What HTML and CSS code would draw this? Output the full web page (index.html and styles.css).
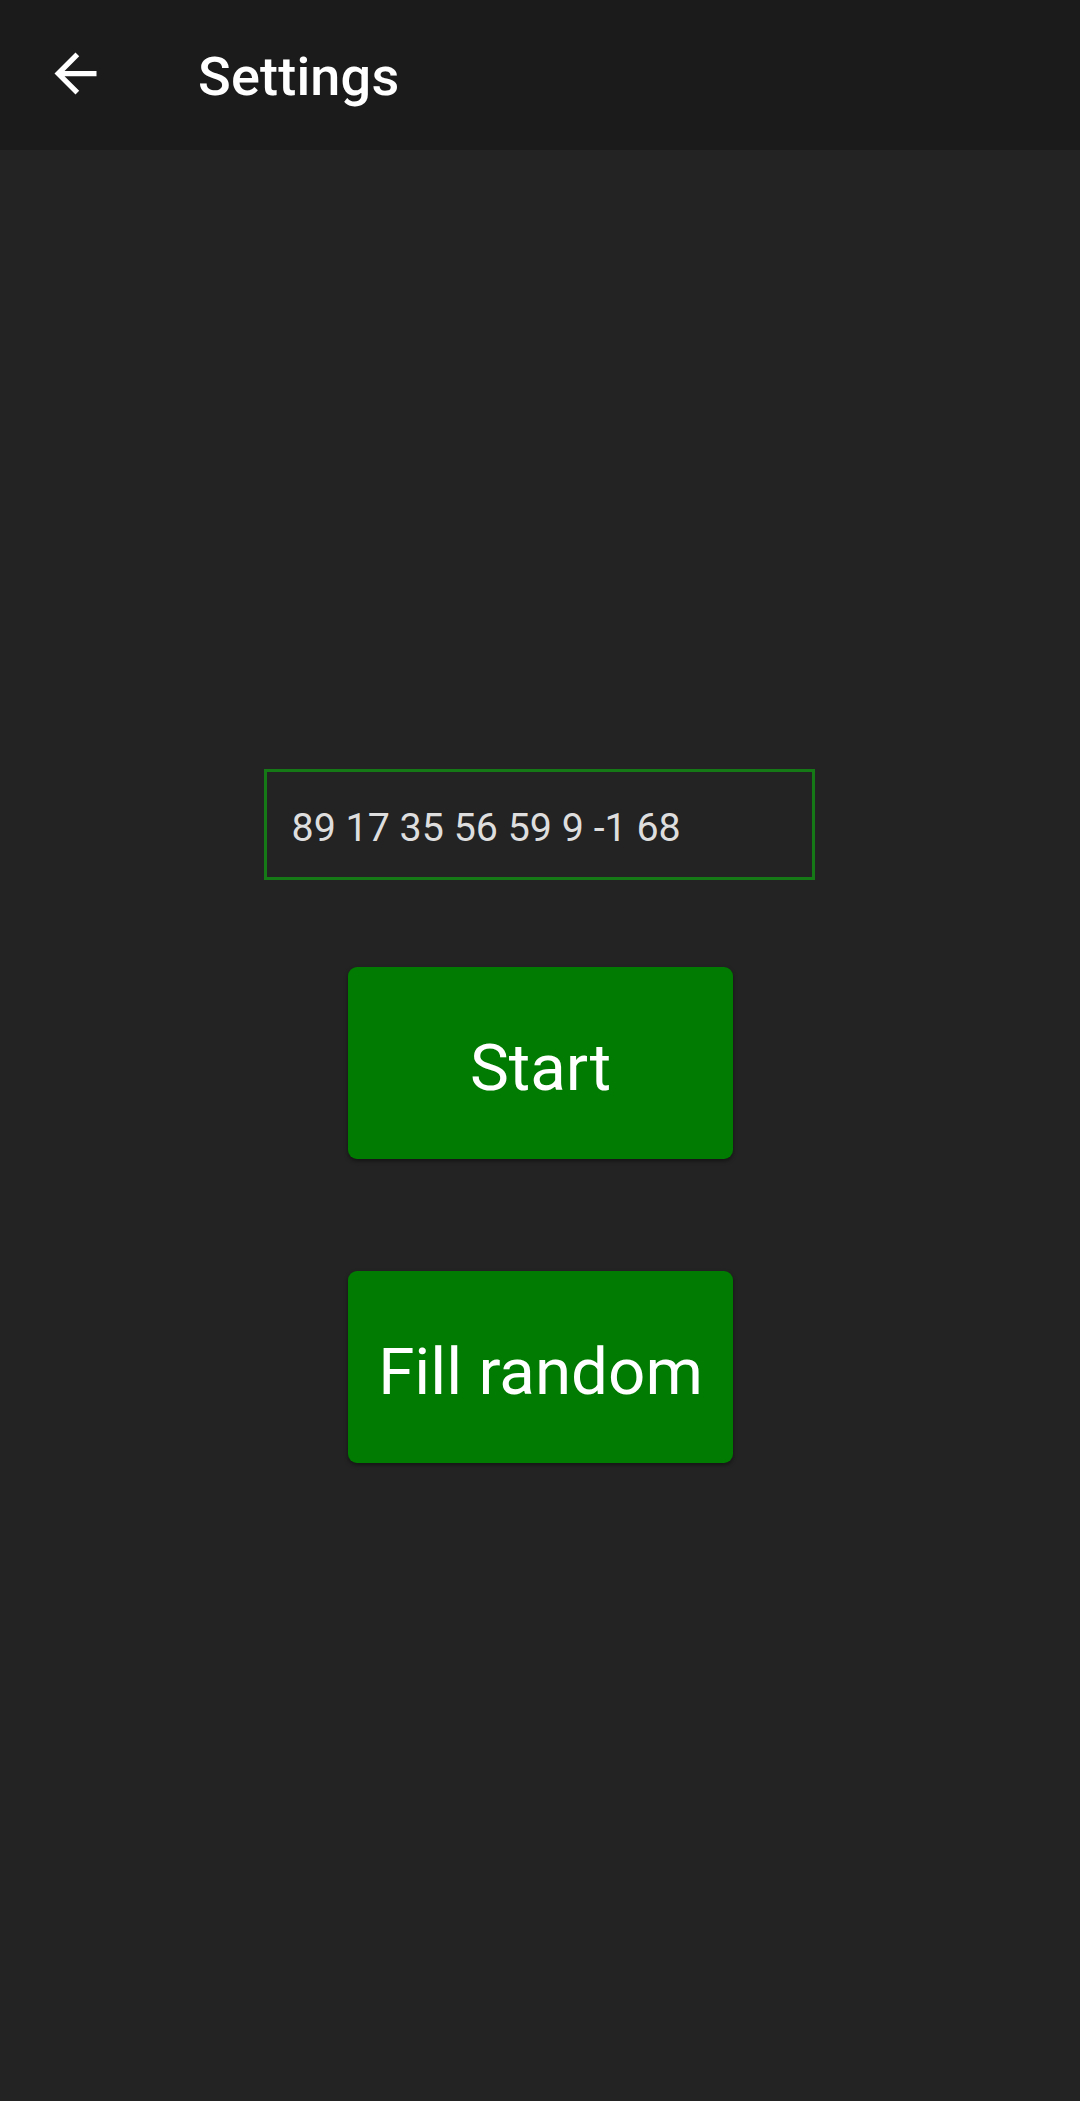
FILE: index.html
```html
<!DOCTYPE html>
<html lang="en">
<head>
<meta charset="utf-8">
<title>Settings</title>
<link rel="stylesheet" href="styles.css">
</head>
<body>
<header class="appbar">
  <button class="back" aria-label="Back">
    <svg viewBox="0 0 24 24" width="63" height="63"><path fill="#ffffff" d="M20 11H7.83l5.59-5.59L12 4l-8 8 8 8 1.41-1.41L7.83 13H20v-2z"/></svg>
  </button>
  <h1 class="title">Settings</h1>
</header>
<main class="content">
  <input class="numbers" type="text" value="89 17 35 56 59 9 -1 68">
  <button class="action action-start">Start</button>
  <button class="action action-fill">Fill random</button>
</main>
</body>
</html>
```
FILE: styles.css
```css
html, body {
  margin: 0;
  padding: 0;
  background: #232323;
  height: 100%;
}
body {
  font-family: Roboto, "Noto Sans", sans-serif;
  color: #ffffff;
}
.appbar {
  height: 150px;
  background: #1b1b1b;
  display: flex;
  align-items: center;
  padding-left: 44px;
  box-sizing: border-box;
}
.back {
  width: 63px;
  height: 63px;
  padding: 0;
  margin: -3px 0 0 0;
  border: 0;
  background: transparent;
  display: block;
}
.back svg {
  display: block;
}
.title {
  margin: 2px 0 0 91px;
  font-size: 54px;
  font-weight: 500;
  color: #ffffff;
  letter-spacing: 0.2px;
}
.content {
  display: flex;
  flex-direction: column;
  align-items: center;
  padding-top: 619px;
  padding-left: 1px;
}
.numbers {
  box-sizing: border-box;
  width: 551px;
  height: 111px;
  margin: 0 0 0 -3px;
  border: 3px solid #157915;
  background: transparent;
  color: #dedede;
  font-family: Roboto, sans-serif;
  font-size: 39.4px;
  padding: 5px 0 0 25px;
  outline: none;
}
.action {
  box-sizing: border-box;
  width: 385px;
  height: 192px;
  border: 0;
  border-radius: 9px;
  background: #017b01;
  color: #ffffff;
  font-family: Roboto, sans-serif;
  font-size: 65.5px;
  padding: 8px 0 0 0;
  box-shadow: 0 2px 4px rgba(0, 0, 0, 0.45);
}
.action-start {
  margin-top: 87px;
}
.action-fill {
  margin-top: 112px;
}
```
